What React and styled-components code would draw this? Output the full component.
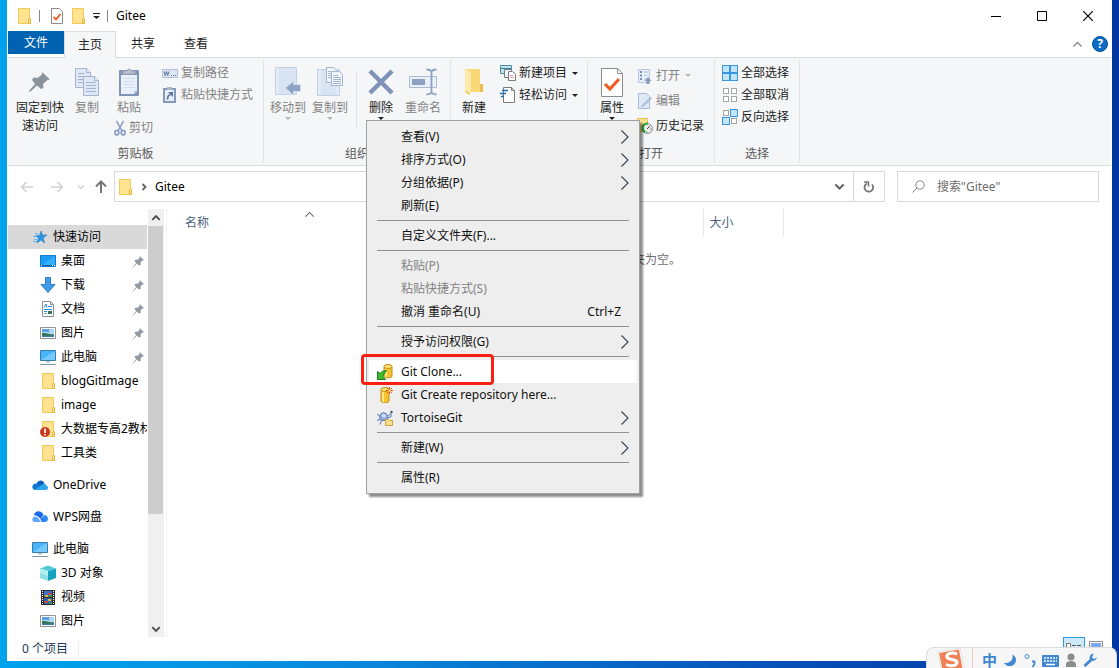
import React from "react";
import styled, { createGlobalStyle } from "styled-components";

const Global = createGlobalStyle`
  * { box-sizing: border-box; }
  html, body { margin: 0; height: 100%; overflow: hidden; }
  body, button, input, table {
    font-family: "Noto Sans", "Noto Sans CJK SC", sans-serif;
    font-size: 12px;
    line-height: 16px;
    color: #000;
  }
  button { border: 0; padding: 0; margin: 0; background: none; text-align: left; white-space: nowrap; }
  svg { display: block; flex: none; }
`;

/* ---------- icons ---------- */

const Svg = ({ w = 16, h = w, children }) => (
  <svg width={w} height={h} viewBox={`0 0 ${w} ${h}`} fill="none" aria-hidden="true">{children}</svg>
);

const Folder = ({ alert }) => (
  <Svg>
    <path d="M2.500 .5h11v10l1 1v4h-12z" fill="#ffe391" stroke="#efc95a" />
    <path d="M12.500 11.500l.5-1h1.500v5h-2z" fill="#fbe08a" stroke="#e5b93f" />
    {alert && (
      <g>
        <circle cx="5" cy="11" r="5" fill="#c8391f" />
        <path d="M5 7.500v4.500M5 13v1.500" stroke="#fff" strokeWidth="1.600" />
      </g>
    )}
  </Svg>
);

const PropsDoc = () => (
  <Svg w={12} h={16}>
    <path d="M.5 .5h8l3 3v12h-11z" fill="#fff" stroke="#8d8d8d" />
    <path d="M2.500 9l2.500 2.500L9.500 6" stroke="#f05a1c" strokeWidth="1.800" />
  </Svg>
);

const Caret = ({ color = "#222" }) => (
  <Svg w={6} h={3}><path d="M0 0h6L3 3z" fill={color} /></Svg>
);

const PinBig = () => (
  <Svg w={22} h={22}>
    <path d="M13 1l8 7.500-2.500 .5-4.500 4 .5 4-2.500 1-4-3.500L1 21l-1-1 6-7L3 9l1.500-2.500 4 .5L13 3.500z" fill="#8a949b" />
  </Svg>
);

const PinSmall = () => (
  <Svg w={11} h={11}>
    <path d="M6.500 0l4.500 4-1.500 .5-2 2v2.500l-1.500 .5-2-2L.5 11 0 10.500 3.300 7 1.500 5l1-1.500 2.300 .3L6.500 2z" fill="#8f9aa3" />
  </Svg>
);

const CopyBig = () => (
  <Svg w={24} h={28}>
    <g fill="#dfe8f4" stroke="#a3b5d0">
      <path d="M.5 .5h11l4 4v15h-15z" />
      <path d="M11.500 .5v4h4" />
      <path d="M3 5.500h6M3 8.500h10M3 11.500h10M3 14.500h10" />
      <path d="M8.500 8.500h11l4 4v15h-15z" />
      <path d="M19.500 8.500v4h4" />
      <path d="M11 14.500h10M11 17.500h10M11 20.500h10M11 23.500h10" />
    </g>
  </Svg>
);

const PasteBig = () => (
  <Svg w={20} h={30}>
    <rect y="3" width="20" height="26" rx="1" fill="#8094bc" />
    <path d="M2 8h16v16l-3 3H2z" fill="#e9f0fa" />
    <path d="M4 11.500h12M4 14.500h12M4 17.500h12M4 20.500h12" stroke="#d3deee" />
    <path d="M18 24l-3 3v-3z" fill="#b9c7de" />
    <path d="M4 7V4h4a2 2 0 014 0h4v3z" fill="#b9bfcb" stroke="#9aa4b6" />
  </Svg>
);

const Scissors = () => (
  <Svg w={12} h={16}>
    <path d="M2.500 1L8 11M9.500 1L4 11" stroke="#9aaccb" strokeWidth="1.800" />
    <ellipse cx="2.800" cy="12.800" rx="2" ry="2.200" stroke="#8094bc" strokeWidth="1.500" />
    <ellipse cx="9.200" cy="12.800" rx="2" ry="2.200" stroke="#8094bc" strokeWidth="1.500" />
  </Svg>
);

const PathIcon = () => (
  <Svg>
    <rect x=".5" y="4.500" width="15" height="8" fill="#dbe5f3" stroke="#b3c2da" />
    <path d="M2 6.500l1.200 4 1.300-4 1.200 4 1.300-4M9 10.500h1M11 10.500h1M13 10.500h1" stroke="#5d7299" />
  </Svg>
);

const ShortcutIcon = () => (
  <Svg>
    <rect x="2" y="2" width="11" height="13" fill="#e6eef9" stroke="#8599be" strokeWidth="2" />
    <path d="M5 0h5v3H5z" fill="#a7b4cb" />
    <path d="M5.500 12.500c0-3 1-4.500 3-5" stroke="#5d7299" strokeWidth="1.800" />
    <path d="M6 5h5v5z" fill="#5d7299" />
  </Svg>
);

const MoveTo = () => (
  <Svg w={26} h={30}>
    <path d="M.5 .5h21v27h-21z" fill="#d9e4f3" stroke="#c3d1e6" />
    <path d="M2.500 1v26" stroke="#e7eef8" strokeWidth="2" />
    <path d="M25.500 17.500v7h-7v4l-8-7.500 8-7v3.500z" fill="#8fa3c6" stroke="#eef3fa" strokeWidth=".5" />
  </Svg>
);

const CopyTo = () => (
  <Svg w={26} h={30}>
    <path d="M.5 2.500h22v26h-22z" fill="#d9e4f3" stroke="#c3d1e6" />
    <path d="M2.500 3v25M20.500 20v8" stroke="#e7eef8" strokeWidth="2" />
    <g fill="#f0f5fb" stroke="#a3b5d0">
      <path d="M9.500 .5h7l3 3v12h-10z" />
      <path d="M14.500 4.500h8l3 3v11h-11z" />
      <path d="M16 8.500h5M16 10.500h8M16 12.500h8M16 14.500h8M16 16.500h8M11 4.500h3M11 6.500h3M11 8.500h3M11 10.500h3" />
    </g>
  </Svg>
);

const DeleteX = () => (
  <Svg w={26} h={26}>
    <path d="M2 2l22 22M24 2L2 24" stroke="#7f93b8" strokeWidth="4.500" />
  </Svg>
);

const Rename = () => (
  <Svg w={28} h={28}>
    <path d="M.5 8.500h27v11H.5z" fill="#eaf1f9" stroke="#a9bad4" />
    <path d="M3 11h13v6H3z" fill="#8ea1c4" />
    <path d="M17.500 1.500c3 0 4 .5 5 2 1-1.500 2-2 5-2M22.500 3v22M17.500 26.500c3 0 4-.5 5-2 1 1.500 2 2 5 2" stroke="#8ea1c4" strokeWidth="1.800" />
  </Svg>
);

const NewFolder = () => (
  <Svg w={20} h={28}>
    <path d="M1 1h15v15l3 1v7H6z" fill="#fbd877" />
    <path d="M16 16h3v8h-3z" fill="#eebd4b" />
    <path d="M1 1l6 3v21l-2 2-4-3z" fill="#ffeaa9" />
    <path d="M1 24l4 3 1-1.500L2 22z" fill="#f3cf70" />
  </Svg>
);

const NewItem = () => (
  <Svg w={16} h={16}>
    <path d="M.5 .5h11v8H.5z" fill="#bfe2ef" stroke="#54899c" />
    <path d="M1 3.500h10" stroke="#2f7f9a" />
    <path d="M4.500 4.500h7v8h-7z" fill="#eef8fb" stroke="#7b7b7b" />
    <path d="M8.500 6.500h4l3 3v6h-7z" fill="#fff" stroke="#7b7b7b" />
    <path d="M10 10.500h3M10 12.500h4" stroke="#e79aa3" />
  </Svg>
);

const EasyAccess = () => (
  <Svg w={16} h={16}>
    <path d="M3.500 .5h8l3 3v12h-11z" fill="#fff" stroke="#7b7b7b" />
    <path d="M11.500 .5v3h3" stroke="#7b7b7b" />
    <path d="M2 3.500h6M0 6.500h6M1 9.500h3" stroke="#1f6bb4" strokeWidth="1.500" />
  </Svg>
);

const PropsBig = () => (
  <Svg w={22} h={29}>
    <path d="M.5 .5h16l5 5v23H.5z" fill="#fff" stroke="#8d8d8d" />
    <path d="M16.500 .5v5h5" stroke="#8d8d8d" />
    <path d="M4 16l5 5 9-10" stroke="#f05a1c" strokeWidth="3" />
  </Svg>
);

const OpenIcon = () => (
  <Svg>
    <path d="M1.500 1.500h11v13h-11z" fill="#e6eef9" stroke="#b9c7de" />
    <path d="M3 4h2M3 7.500h2M3 11h2" stroke="#7c90b7" strokeWidth="2" />
    <path d="M7 4h4M7 7.500h3M7 11h2" stroke="#aebdd8" />
    <path d="M9.500 16v-3H7.500L11 9l3.500 4h-2v3z" fill="#8699bf" />
  </Svg>
);

const EditIcon = () => (
  <Svg>
    <path d="M1.500 .5h8l3 3v12h-11z" fill="#dfe9f6" stroke="#a9bad4" />
    <path d="M4 13.500L13.500 4l1 1.500L5.500 14z" fill="#a3b8da" stroke="#b5c5df" />
  </Svg>
);

const HistoryIcon = () => (
  <Svg>
    <path d="M.5 .5h10v13H.5z" fill="#ffe391" stroke="#e5c04f" />
    <circle cx="10.500" cy="10.500" r="5" fill="#e8ebe8" stroke="#8d938d" />
    <path d="M13 8l-3 3M10 13.500v1M13.500 11h1" stroke="#444" />
    <path d="M11 5.500C6.500 5.500 5 8.500 6 12l2 2.500" stroke="#27a33a" strokeWidth="2.200" />
  </Svg>
);

const SelectGrid = ({ on }) => {
  const cells = [[0, 0], [8, 0], [0, 8], [8, 8]];
  const order = [...cells.keys()].sort((a, b) => on[a] - on[b]);
  return (
    <Svg>
      {order.map((i) => {
        const [x, y] = cells[i];
        return on[i] ? (
          <rect key={i} x={x + 0.5} y={y + 0.5} width="7" height="7" fill="#c4e4fb" stroke="#3696e0" />
        ) : (
          <rect key={i} x={x + 1.5} y={y + 1.5} width="5" height="5" fill="#fff" stroke="#a5a5a5" />
        );
      })}
    </Svg>
  );
};

const Arrow = ({ dir, color, weight = 1.6 }) => (
  <Svg w={14} h={14}>
    <g transform={`rotate(${dir} 7 7)`}>
      <path d="M1.500 7H13M6.500 2l-5 5 5 5" stroke={color} strokeWidth={weight} />
    </g>
  </Svg>
);

const Chevron = ({ dir = 0, color = "#666", size = 8, weight = 1.5 }) => (
  <svg width={size} height={size} viewBox="0 0 8 8" fill="none" aria-hidden="true">
    <path d="M1 2.500l3 3 3-3" stroke={color} strokeWidth={weight} transform={`rotate(${dir} 4 4)`} />
  </svg>
);

const MenuArrow = () => (
  <Svg w={8} h={14}>
    <path d="M.5 .5L7 7l-6.500 6.500" stroke="#33414f" strokeWidth="1.100" />
  </Svg>
);

const Star = () => (
  <Svg>
    <path d="M9 2l1.500 4H15l-3.700 2.800L12.500 14 9 11l-4 3 1.500-4.700L4 6.500h3.500z" fill="#2f93e4" stroke="#2380cc" strokeWidth=".6" />
    <path d="M3 4.500h3M1 7.500h4M2 10.500h3M1 12.500h4" stroke="#5db5f3" />
  </Svg>
);

const Desktop = () => (
  <Svg>
    <path d="M.5 2.500h15v11H.5z" fill="#1a9df2" stroke="#0d7bd0" />
    <path d="M1 13L15 3v10z" fill="#33b0fb" />
    <path d="M1 12.500h14" stroke="#0a5fa5" />
    <path d="M1 12.500h1M12 12.500h1M14 12.500h1" stroke="#fff" />
  </Svg>
);

const Download = () => (
  <Svg>
    <path d="M5.500 .5h5v7h4.500L8 15.500 1 7.500h4.500z" fill="#3e9ae6" stroke="#2b7fc9" />
  </Svg>
);

const DocIcon = () => (
  <Svg>
    <path d="M2.500 .5h8l3 3v12h-11z" fill="#fff" stroke="#8a8f94" />
    <path d="M10.500 .5v3h3" stroke="#8a8f94" />
    <path d="M4 6.500L6 3l1 3.500M8 5.500h4M4 8.500h8M4 10.500h3" stroke="#2a8bd8" />
    <path d="M4 12.500h3" stroke="#6ba8d6" />
    <path d="M8 10h4v3H8z" fill="#3c6e54" />
  </Svg>
);

const Picture = () => (
  <Svg>
    <path d="M.5 2.500h15v11H.5z" fill="#fff" stroke="#8f959a" />
    <path d="M2 4h12v8H2z" fill="#a9d6f5" />
    <path d="M2 4h7v3H2z" fill="#5b9fe0" />
    <path d="M2 8c4-.5 7 1 12 1.500V12H2z" fill="#37704a" />
    <path d="M2 10.500h12V12H2z" fill="#3f7fa8" />
  </Svg>
);

const Computer = () => (
  <Svg>
    <path d="M.5 1.500h15v10H.5z" fill="#4ab4f8" stroke="#3b7ca8" />
    <path d="M1 11L15 2v9z" fill="#74caff" />
    <path d="M6 12h4v1.500H6z" fill="#b8c4cc" />
    <path d="M0 15.500h16" stroke="#8797a5" />
  </Svg>
);

const OneDrive = () => (
  <Svg>
    <path d="M4.500 7C5.500 3 11 2 12.500 6.500L8 10z" fill="#0a5fb8" />
    <path d="M3.500 13C-.5 13-1 7.500 3.500 6.500c2 0 4 1 6 2.500l-4 4z" fill="#0f78d4" />
    <path d="M3 12.500L10.500 7.500c1-1.300 3.500-1 3.800 1C17 9.500 16.500 13 13.500 13H4z" fill="#2aa7ea" />
  </Svg>
);

const WpsCloud = () => (
  <Svg>
    <path d="M1 12.500C-.5 10 1 7 4 7.500c2 .5 3 3 5 5.500H3z" fill="#5ba7fb" />
    <path d="M2 6.500C2 1.500 9 .5 11 5c.8 2 1.500 6 0 8H9C8.500 9 6 6.500 2 6.500z" fill="#1668ee" />
    <path d="M11 6c3.500-.5 5.500 2 4.800 5-.5 1.800-2 2-5.300 2 1.500-2 1.300-4.500 .5-7z" fill="#2f86f7" />
    <path d="M2.500 7C6 7 8.500 9.500 9.500 13M9.500 9.500c.5-2 1.500-2.800 2.500-3" stroke="#fff" strokeWidth=".8" />
  </Svg>
);

const Cube = () => (
  <Svg>
    <path d="M0 3.500L8 6v10l-8-3z" fill="#8fe0e6" />
    <path d="M16 3.500L8 6v10l8-3z" fill="#15a3bd" />
    <path d="M0 3.500L8 .5l8 3L8 6z" fill="#4fcbd8" />
    <path d="M0 3.500L8 6v5L0 8z" fill="#b4eef0" />
  </Svg>
);

const Video = () => (
  <Svg>
    <path d="M1 1h14v15H1z" fill="#2e2e32" />
    <path d="M2.500 2v13M13.500 2v13" stroke="#fff" strokeDasharray="1 1" />
    <path d="M4 2h8v6H4z" fill="#3d6fc4" />
    <path d="M4 9h8v6H4z" fill="#3263b5" />
    <path d="M5 6h3v2H5zM8 10h3v2H8z" fill="#e8b72c" />
    <path d="M8 4h3v2H8zM5 12h3v2H5z" fill="#d9492f" />
    <path d="M9 6h3v2H9zM9 13h3v2H9z" fill="#3c9a48" />
  </Svg>
);

const Db = ({ x = 0, h = 12 }) => (
  <g transform={`translate(${x} 0)`}>
    <path d={`M.5 3v${h - 2}c0 2.500 8 2.500 8 0V3z`} fill="#f5c430" stroke="#c28e12" />
    <path d={`M2.500 4v${h - 2}`} stroke="#fff0a8" strokeWidth="1.500" />
    <ellipse cx="4.500" cy="2.500" rx="4" ry="2" fill="#ffe375" stroke="#c28e12" />
  </g>
);

const GitClone = () => (
  <Svg>
    <Db x={6.5} h={11} />
    <path d="M.5 15.500v-8l2.500 2C4.500 7.500 6.500 6.500 9.500 6.500 8.500 8.500 6.500 9.500 6 12.500l2.500 3z" fill="#3ebb2c" stroke="#1b7d14" />
  </Svg>
);

const GitCreate = () => (
  <Svg>
    <Db x={3.5} h={13} />
    <path d="M12.500 0v7M9 3.500h7M10 1l5 5M15 1l-5 5" stroke="#e8522a" />
    <circle cx="12.500" cy="3.500" r="1.500" fill="#ffd45e" />
  </Svg>
);

const Tortoise = () => (
  <Svg>
    <path d="M2.500 8c0-7 8-7 8.500 0l-1 2.500H4z" fill="#8fa9dc" stroke="#5f78ad" />
    <path d="M4.500 5l2-1.500L9 5l-.5 2.500H5.500z" fill="#cddcf6" />
    <path d="M0 4l3 2M0 10.500l3.500-1.500M3 14.500L4.500 10.500" stroke="#8d9dbd" strokeWidth="1.500" />
    <path d="M10.500 6.500l2.500-3 1.500 .5-.5 3-2.500 1z" fill="#b5c9ef" stroke="#7087b5" strokeWidth=".8" />
    <circle cx="14.500" cy="2" r="1.200" fill="#2b5a70" />
    <path d="M8.500 9.500h3l1 1h3v5h-7z" fill="#fbe08a" stroke="#c9a13a" />
  </Svg>
);

/* ---------- window frame ---------- */

const Desk = styled.div`
  position: relative;
  height: 100vh;
  display: flex;
  flex-direction: column;
  padding: 0 7px 7px;
  overflow: hidden;
  background: linear-gradient(90deg, #00a2ec 0%, #0a8add 30%, #0750b8 70%, #04369f 100%);
`;

const Window = styled.main`
  flex: 1;
  min-height: 0;
  display: flex;
  flex-direction: column;
  padding: 0 1px;
  background: #fff;
`;

const TitleBar = styled.header`
  height: 31px;
  flex: none;
  display: flex;
  align-items: center;
  padding-left: 8px;
`;

const QuickTools = styled.div`
  display: flex;
  align-items: center;
  gap: 7px;
`;

const Bar = styled.i`
  width: 1px;
  height: 12px;
  margin-right: 4px;
  background: #8a8a8a;
`;

const WindowTitle = styled.h1`
  margin: 0 auto 0 4px;
  font-size: 12px;
  font-weight: 400;
`;

const CaptionButton = styled.button`
  width: 46px;
  height: 31px;
  display: grid;
  place-items: center;
`;

const TabRow = styled.nav`
  height: 27px;
  flex: none;
  display: flex;
  border-bottom: 1px solid #dadbdc;
`;

const Tab = styled.button`
  width: ${(p) => p.$w}px;
  height: ${(p) => ({ file: 23, active: 27 }[p.$kind] || 25)}px;
  text-align: center;
  color: ${(p) => (p.$kind === "file" ? "#fff" : "#222")};
  background: ${(p) => ({ file: "#0063b1", active: "#f5f6f7" }[p.$kind] || "none")};
  border: ${(p) => (p.$kind === "active" ? "1px solid #dadbdc" : "0")};
  border-bottom: 0;
`;

const TabEnd = styled.div`
  margin-left: auto;
  display: flex;
  align-items: center;
  gap: 9px;
  padding-right: 3px;
`;

const Help = styled.button`
  width: 16px;
  height: 16px;
  border-radius: 50%;
  border: 1px solid #0a4f8c;
  background: #0a6cc8;
  color: #fff;
  font-weight: 700;
  line-height: 14px;
  text-align: center;
`;

/* ---------- ribbon ---------- */

const Ribbon = styled.section`
  height: 108px;
  flex: none;
  display: flex;
  padding: 2px 0;
  background: #f5f6f7;
  border-bottom: 1px solid #dadbdc;
`;

const Group = styled.div`
  width: ${(p) => p.$w}px;
  flex: none;
  display: flex;
  flex-direction: column;
  border-right: 1px solid #e2e3e4;
`;

const GroupBody = styled.div`
  flex: 1;
  display: flex;
  padding-left: ${(p) => p.$pad}px;
`;

const GroupLabel = styled.div`
  height: 17px;
  text-align: center;
  color: #5a5a5a;
`;

const Big = styled.button`
  width: ${(p) => p.$w || 42}px;
  display: flex;
  flex-direction: column;
  align-items: center;
  align-self: flex-start;
  padding-top: 5px;
  text-align: center;
  line-height: 18px;
  color: ${(p) => (p.$off ? "#838383" : "#222")};
`;

const BigIcon = styled.span`
  height: 34px;
  display: grid;
  place-items: center;
`;

const SmallCol = styled.div`
  display: flex;
  flex-direction: column;
  padding-top: ${(p) => p.$top ?? 2}px;
  margin-left: ${(p) => p.$left || 0}px;
`;

const Small = styled.button`
  height: ${(p) => p.$h || 22}px;
  display: flex;
  align-items: center;
  gap: 3px;
  margin-left: ${(p) => p.$left || 0}px;
  color: ${(p) => (p.$off ? "#838383" : "#222")};
`;

const CaretSlot = styled.span`
  margin-left: 2px;
`;

const Split = styled.i`
  width: 1px;
  height: 56px;
  margin: 12px 3px 0 5px;
  background: #dfe0e1;
`;

const BigCommand = ({ icon, label, off, w, caret }) => (
  <Big $w={w} $off={off}>
    <BigIcon>{icon}</BigIcon>
    {label}
    {caret && <Caret color={off ? "#b5b5b5" : "#222"} />}
  </Big>
);

const SmallCommand = ({ icon, label, off, h, left, caret }) => (
  <Small $off={off} $h={h} $left={left}>
    {icon}
    {label}
    {caret && <CaretSlot><Caret color={off ? "#b5b5b5" : "#222"} /></CaretSlot>}
  </Small>
);

/* ---------- address row ---------- */

const AddressRow = styled.div`
  flex: none;
  display: flex;
  align-items: center;
  padding: 5px 12px 7px;
`;

const NavButtons = styled.div`
  width: 94px;
  display: flex;
  align-items: center;
  gap: 16px;
`;

const NavLast = styled.div`
  display: flex;
  align-items: center;
  gap: 9px;
  margin-left: -3px;
`;

const AddressBox = styled.div`
  flex: 1;
  height: 31px;
  display: flex;
  align-items: center;
  border: 1px solid #d9d9d9;
`;

const Crumb = styled.div`
  flex: 1;
  display: flex;
  align-items: center;
  gap: 7px;
  padding-left: 2px;
`;

const BoxButton = styled.button`
  width: ${(p) => p.$w}px;
  height: 29px;
  display: grid;
  place-items: center;
  border-left: ${(p) => (p.$line ? "1px solid #d9d9d9" : "0")};
`;

const SearchBox = styled.label`
  width: 202px;
  height: 31px;
  display: flex;
  align-items: center;
  gap: 12px;
  margin-left: 12px;
  padding-left: 14px;
  border: 1px solid #d9d9d9;
`;

const SearchInput = styled.input`
  flex: 1;
  min-width: 0;
  border: 0;
  padding: 0;
  outline: 0;
  background: none;
  &::placeholder { color: #6d6d6d; opacity: 1; }
`;

/* ---------- body ---------- */

const Body = styled.div`
  flex: 1;
  min-height: 0;
  display: flex;
`;

const Tree = styled.nav`
  width: 139px;
  flex: none;
  display: flex;
  flex-direction: column;
  padding-top: 16px;
  overflow: hidden;
`;

const TreeRow = styled.a`
  height: 24px;
  flex: none;
  display: flex;
  align-items: center;
  gap: 5px;
  margin-top: ${(p) => (p.$gap ? 8 : 0)}px;
  padding: 0 ${(p) => (p.$pin ? 3 : 0)}px 0 ${(p) => (p.$root ? 24 : 32)}px;
  background: ${(p) => (p.$on ? "#d9d9d9" : "none")};
  color: #000;
  text-decoration: none;
  white-space: nowrap;
`;

const TreeText = styled.span`
  flex: 1;
  overflow: hidden;
`;

const ScrollBar = styled.div`
  width: 16px;
  flex: none;
  display: flex;
  flex-direction: column;
  margin-left: 1px;
  background: #f0f0f0;
`;

const ScrollArrow = styled.button`
  height: 17px;
  display: grid;
  place-items: center;
`;

const Track = styled.div`
  flex: 1;
`;

const Thumb = styled.div`
  height: 73%;
  margin-right: 1px;
  background: #cdcdcd;
`;

const FilePane = styled.section`
  flex: 1;
  margin-left: 2px;
  padding-left: 10px;
  border-left: 1px solid #f2f2f2;
`;

const Columns = styled.table`
  border-collapse: collapse;
  table-layout: fixed;
  width: 606px;
`;

const Th = styled.th`
  width: ${(p) => p.$w}px;
  height: 27px;
  padding: 0 0 0 ${(p) => p.$pad || 6}px;
  border-right: 1px solid #e5e5e5;
  text-align: left;
  font-weight: 400;
  color: #4c607a;
`;

const SortCell = styled.span`
  height: 27px;
  display: flex;
  align-items: center;
`;

const SortMark = styled.span`
  align-self: flex-start;
  margin-left: 95px;
`;

const Empty = styled.p`
  margin: 16px 10px 0 0;
  text-align: center;
  color: #6d6d6d;
`;

const StatusBar = styled.footer`
  height: 24px;
  flex: none;
  display: flex;
  align-items: flex-start;
  padding: 0 4px 0 14px;
  color: #1e395b;
`;

const StatusText = styled.span`
  margin-right: auto;
  margin-top: 4px;
  padding-right: 10px;
  border-right: 1px solid #eee;
`;

const ViewButton = styled.button`
  width: 22px;
  height: 24px;
  padding-top: 4px;
  display: grid;
  justify-items: center;
  background: ${(p) => (p.$on ? "#cde8f6" : "none")};
  border: ${(p) => (p.$on ? "1px solid #26a0da" : "0")};
`;

/* ---------- context menu ---------- */

const Menu = styled.div`
  position: absolute;
  left: 366px;
  top: 120px;
  width: 274px;
  padding: 4px 2px;
  background: #eee;
  border: 1px solid #a0a0a0;
  box-shadow: 3px 3px 2px rgba(0, 0, 0, 0.45);
`;

const Item = styled.button`
  position: relative;
  width: 100%;
  height: 23px;
  display: flex;
  align-items: center;
  padding: 0 8px;
  background: ${(p) => (p.$on ? "#fff" : "none")};
  color: ${(p) => (p.$off ? "#838383" : "#111")};
`;

const ItemIcon = styled.span`
  width: 24px;
`;

const ItemText = styled.span`
  flex: 1;
`;

const Shortcut = styled.span`
  margin-right: 8px;
`;

const Rule = styled.hr`
  height: 1px;
  margin: 3px 8px;
  border: 0;
  background: #919191;
`;

const RedFrame = styled.i`
  position: absolute;
  left: -8px;
  top: -6px;
  width: 133px;
  height: 31px;
  border: 3px solid #fb1f14;
  border-radius: 4px;
`;

const menuGroups = [
  [["查看(V)", { sub: 1 }], ["排序方式(O)", { sub: 1 }], ["分组依据(P)", { sub: 1 }], ["刷新(E)", {}]],
  [["自定义文件夹(F)...", {}]],
  [["粘贴(P)", { off: 1 }], ["粘贴快捷方式(S)", { off: 1 }], ["撤消 重命名(U)", { keys: "Ctrl+Z" }]],
  [["授予访问权限(G)", { sub: 1 }]],
  [["Git Clone...", { icon: <GitClone />, on: 1 }], ["Git Create repository here...", { icon: <GitCreate /> }], ["TortoiseGit", { icon: <Tortoise />, sub: 1 }]],
  [["新建(W)", { sub: 1 }]],
  [["属性(R)", {}]],
];

const ContextMenu = () => (
  <Menu role="menu">
    {menuGroups.map((group, g) => (
      <React.Fragment key={g}>
        {g > 0 && <Rule />}
        {group.map(([label, o]) => (
          <Item key={label} role="menuitem" $on={o.on} $off={o.off}>
            <ItemIcon>{o.icon}</ItemIcon>
            <ItemText>{label}</ItemText>
            {o.keys && <Shortcut>{o.keys}</Shortcut>}
            {o.sub && <MenuArrow />}
            {o.on && <RedFrame />}
          </Item>
        ))}
      </React.Fragment>
    ))}
  </Menu>
);

/* ---------- input method bar ---------- */

const ImeBar = styled.aside`
  position: absolute;
  right: 2px;
  bottom: 0;
  width: 191px;
  height: 21px;
  overflow: hidden;
  display: flex;
  align-items: flex-start;
  padding-left: 10px;
  background: #f6f6f6;
  border: 1px solid #dcdcdc;
  border-bottom: 0;
  border-radius: 8px 8px 0 0;
`;

const ImeTools = styled.div`
  display: flex;
  gap: 5px;
  margin-left: 7px;
  padding: 5px 0 0 9px;
  border-left: 1px solid #f3c9c9;
`;

const ImeText = styled.span`
  width: 16px;
  font-size: 15px;
  font-weight: 700;
  line-height: 15px;
  color: #3f87cf;
`;

const treeRows = [
  ["快速访问", <Star />, { root: 1, on: 1 }],
  ["桌面", <Desktop />, { pin: 1 }],
  ["下载", <Download />, { pin: 1 }],
  ["文档", <DocIcon />, { pin: 1 }],
  ["图片", <Picture />, { pin: 1 }],
  ["此电脑", <Computer />, { pin: 1 }],
  ["blogGitImage", <Folder />, {}],
  ["image", <Folder />, {}],
  ["大数据专高2教材", <Folder alert />, {}],
  ["工具类", <Folder />, {}],
  ["OneDrive", <OneDrive />, { root: 1, gap: 1 }],
  ["WPS网盘", <WpsCloud />, { root: 1, gap: 1 }],
  ["此电脑", <Computer />, { root: 1, gap: 1 }],
  ["3D 对象", <Cube />, {}],
  ["视频", <Video />, {}],
  ["图片", <Picture />, {}],
];

export default function App() {
  return (
    <>
      <Global />
      <Desk>
        <Window>
          <TitleBar>
            <QuickTools>
              <Folder />
              <Bar />
              <PropsDoc />
              <Folder />
              <Svg w={7} h={6}><path d="M0 .5h7" stroke="#222" /><path d="M0 3h7L3.500 6z" fill="#222" /></Svg>
              <Bar />
            </QuickTools>
            <WindowTitle>Gitee</WindowTitle>
            <CaptionButton aria-label="最小化"><Svg w={10}><path d="M0 5.500h10" stroke="#000" /></Svg></CaptionButton>
            <CaptionButton aria-label="最大化"><Svg w={10}><path d="M.5 .5h9v9h-9z" stroke="#000" /></Svg></CaptionButton>
            <CaptionButton aria-label="关闭"><Svg w={10}><path d="M0 0l10 10M10 0L0 10" stroke="#000" strokeWidth="1.200" /></Svg></CaptionButton>
          </TitleBar>

          <TabRow>
            <Tab $w={56} $kind="file">文件</Tab>
            <Tab $w={52} $kind="active">主页</Tab>
            <Tab $w={54}>共享</Tab>
            <Tab $w={52}>查看</Tab>
            <TabEnd>
              <Chevron dir={180} size={11} color="#8a8a8a" weight={0.9} />
              <Help aria-label="帮助">?</Help>
            </TabEnd>
          </TabRow>

          <Ribbon>
            <Group $w={256}>
              <GroupBody $pad={4}>
                <BigCommand w={56} icon={<PinBig />} label={<>固定到快<br />速访问</>} />
                <BigCommand w={38} off icon={<CopyBig />} label="复制" />
                <SmallCol $top={0}>
                  <BigCommand w={46} off icon={<PasteBig />} label="粘贴" />
                  <SmallCommand left={8} off icon={<Scissors />} label="剪切" />
                </SmallCol>
                <SmallCol $left={9}>
                  <SmallCommand off icon={<PathIcon />} label="复制路径" />
                  <SmallCommand off icon={<ShortcutIcon />} label="粘贴快捷方式" />
                </SmallCol>
              </GroupBody>
              <GroupLabel>剪贴板</GroupLabel>
            </Group>

            <Group $w={187}>
              <GroupBody $pad={3}>
                <BigCommand off caret icon={<MoveTo />} label="移动到" />
                <BigCommand off caret icon={<CopyTo />} label="复制到" />
                <Split />
                <BigCommand caret icon={<DeleteX />} label="删除" />
                <BigCommand off icon={<Rename />} label="重命名" />
              </GroupBody>
              <GroupLabel>组织</GroupLabel>
            </Group>

            <Group $w={137}>
              <GroupBody $pad={2}>
                <BigCommand icon={<NewFolder />} label="新建" />
                <SmallCol $left={5}>
                  <SmallCommand caret icon={<NewItem />} label="新建项目" />
                  <SmallCommand caret icon={<EasyAccess />} label="轻松访问" />
                </SmallCol>
              </GroupBody>
              <GroupLabel />
            </Group>

            <Group $w={127}>
              <GroupBody $pad={3}>
                <BigCommand caret icon={<PropsBig />} label="属性" />
                <SmallCol $left={4} $top={3}>
                  <SmallCommand h={25} off caret icon={<OpenIcon />} label="打开" />
                  <SmallCommand h={25} off icon={<EditIcon />} label="编辑" />
                  <SmallCommand h={25} icon={<HistoryIcon />} label="历史记录" />
                </SmallCol>
              </GroupBody>
              <GroupLabel>打开</GroupLabel>
            </Group>

            <Group $w={85}>
              <GroupBody $pad={7}>
                <SmallCol>
                  <SmallCommand icon={<SelectGrid on={[1, 1, 1, 1]} />} label="全部选择" />
                  <SmallCommand icon={<SelectGrid on={[0, 0, 0, 0]} />} label="全部取消" />
                  <SmallCommand icon={<SelectGrid on={[0, 1, 1, 0]} />} label="反向选择" />
                </SmallCol>
              </GroupBody>
              <GroupLabel>选择</GroupLabel>
            </Group>
          </Ribbon>

          <AddressRow>
            <NavButtons>
              <button aria-label="后退"><Arrow dir={0} color="#d2d2d2" /></button>
              <button aria-label="前进"><Arrow dir={180} color="#d2d2d2" /></button>
              <NavLast>
                <Chevron color="#d2d2d2" />
                <button aria-label="上移"><Arrow dir={90} color="#757575" weight={2} /></button>
              </NavLast>
            </NavButtons>
            <AddressBox>
              <Crumb>
                <Folder />
                <Chevron dir={-90} weight={1.8} />
                Gitee
              </Crumb>
              <BoxButton $w={28} aria-label="历史"><Chevron size={11} weight={1.5} /></BoxButton>
              <BoxButton $w={31} $line aria-label="刷新">
                <Svg w={12} h={12}>
                  <path d="M4 2.500A4.300 4.300 0 109 3.500" stroke="#757575" strokeWidth="1.800" />
                  <path d="M1 1h4.500v4.500" stroke="#757575" strokeWidth="1.500" />
                </Svg>
              </BoxButton>
            </AddressBox>
            <SearchBox>
              <Svg w={13} h={13}>
                <circle cx="8" cy="5" r="4.200" stroke="#8a8a8a" />
                <path d="M5 8L.5 12.500" stroke="#8a8a8a" />
              </Svg>
              <SearchInput placeholder={'搜索"Gitee"'} aria-label="搜索" />
            </SearchBox>
          </AddressRow>

          <Body>
            <Tree>
              {treeRows.map(([label, icon, o], i) => (
                <TreeRow href="#" key={i} $root={o.root} $on={o.on} $gap={o.gap} $pin={o.pin}>
                  {icon}
                  <TreeText>{label}</TreeText>
                  {o.pin && <PinSmall />}
                </TreeRow>
              ))}
            </Tree>
            <ScrollBar>
              <ScrollArrow aria-label="向上"><Chevron dir={180} size={10} color="#505050" weight={1.6} /></ScrollArrow>
              <Track><Thumb /></Track>
              <ScrollArrow aria-label="向下"><Chevron size={10} color="#505050" weight={1.6} /></ScrollArrow>
            </ScrollBar>
            <FilePane>
              <Columns>
                <thead>
                  <tr>
                    <Th $w={267} $pad={8}>
                      <SortCell>名称<SortMark><Chevron dir={180} size={11} weight={0.8} /></SortMark></SortCell>
                    </Th>
                    <Th as="td" $w={259} />
                    <Th $w={80}>大小</Th>
                  </tr>
                </thead>
              </Columns>
              <Empty>此文件夹为空。</Empty>
            </FilePane>
          </Body>

          <StatusBar>
            <StatusText>0 个项目</StatusText>
            <ViewButton $on aria-label="详细信息">
              <Svg w={16} h={12}>
                <path d="M.5 1.500h4v4h-4zM.5 7.500h4v4h-4z" fill="#fff" stroke="#777" />
                <path d="M6 3.500h4M11 3.500h4M6 9.500h4M11 9.500h4" stroke="#555" />
              </Svg>
            </ViewButton>
            <ViewButton aria-label="大图标">
              <Svg w={14} h={12}>
                <path d="M.5 .5h13v11H.5z" fill="#fff" stroke="#8c8c8c" />
                <path d="M2 2h10v8H2z" fill="#7aa9ea" />
              </Svg>
            </ViewButton>
          </StatusBar>
        </Window>

        <ContextMenu />

        <ImeBar>
          <Svg w={28} h={24}>
            <path d="M0 4L23 0l5 22-22 4z" fill="#fff" stroke="#e3e3e3" />
            <path d="M2 5l20-3.500 3.500 19L6 24z" fill="#f08055" />
            <path d="M20 6c-5-2-11-.5-10 3 1 3.500 9 1.500 10 5 .5 3.500-6 5-11 2.500" stroke="#fff" strokeWidth="3" />
          </Svg>
          <ImeTools>
            <ImeText>中</ImeText>
            <Svg w={15}><path d="M9.500 1.500c1 6-3 9-8.500 8.500 3 5 12 4 12-3.500 0-2-1.500-4-3.500-5z" fill="#3f87cf" /></Svg>
            <Svg w={14}><circle cx="4" cy="3.500" r="2" stroke="#3f87cf" /><path d="M9 8.500h2.500v2.500L9.500 14" stroke="#3f87cf" strokeWidth="1.800" /></Svg>
            <Svg w={17}>
              <rect y="2" width="17" height="12" rx="1" fill="#3f87cf" />
              <path d="M2 5h13M2 8h13" stroke="#fff" strokeWidth="1.500" strokeDasharray="2 1" />
              <path d="M4 11.500h9" stroke="#fff" strokeWidth="1.500" />
            </Svg>
            <Svg w={14}><circle cx="7" cy="4" r="3.500" fill="#8c8c8c" /><path d="M2 14V11c0-4 10-4 10 0v3z" fill="#8c8c8c" /></Svg>
            <Svg w={15}><path d="M1.500 13L8 7" stroke="#3f87cf" strokeWidth="3" /><path d="M10.500 .5C7 1 6 4 7 7c2 2 6 1 7-2.500L11 6 9 4.500z" fill="#3f87cf" /></Svg>
          </ImeTools>
        </ImeBar>
      </Desk>
    </>
  );
}
